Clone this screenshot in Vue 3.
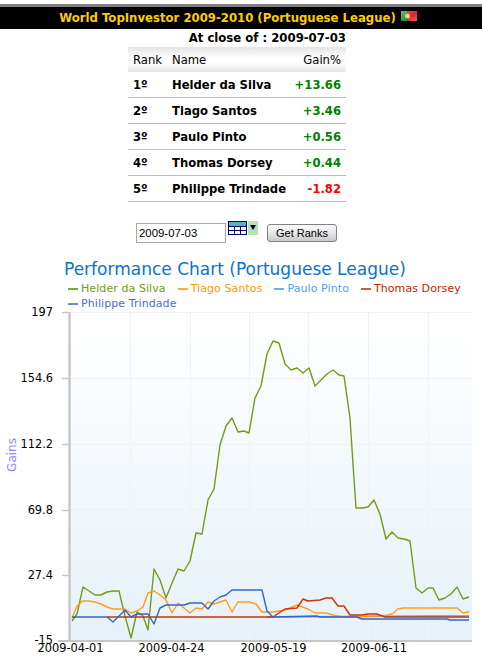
<script setup>
const ranks = [
  { pos: '1º', name: 'Helder da Silva', gain: '+13.66', up: true },
  { pos: '2º', name: 'Tiago Santos', gain: '+3.46', up: true },
  { pos: '3º', name: 'Paulo Pinto', gain: '+0.56', up: true },
  { pos: '4º', name: 'Thomas Dorsey', gain: '+0.44', up: true },
  { pos: '5º', name: 'Philippe Trindade', gain: '-1.82', up: false }
]
const legend = [
  { name: 'Helder da Silva', line: '#82a82a', text: '#6f9e14' },
  { name: 'Tiago Santos', line: '#ffab3d', text: '#ff9900' },
  { name: 'Paulo Pinto', line: '#6aaeff', text: '#4d9fff' },
  { name: 'Thomas Dorsey', line: '#d9573a', text: '#cc2200' },
  { name: 'Philippe Trindade', line: '#6a8ade', text: '#4b6bdd' }
]
const yLabels = [
  { t: '197', y: 315 }, { t: '154.6', y: 381 }, { t: '112.2', y: 447 },
  { t: '69.8', y: 513 }, { t: '27.4', y: 578 }, { t: '-15', y: 643 }
]
const xLabels = [
  { t: '2009-04-01', x: 70.5 }, { t: '2009-04-24', x: 171.5 },
  { t: '2009-05-19', x: 273.5 }, { t: '2009-06-11', x: 374 }
]
const vGrid = [130.5, 190.5, 249.5, 308.5, 368.5, 428.5]
const hGrid = [377.5, 443.5, 508.5, 574.5]
const ticks = [311, 377, 443, 509, 574]

const green = '72,620 77,613 83,586 89,590 95,594 101,594 107,591 113,590 119,590 125,615 131,637 137,611 143,615 148,629 154,568 160,579 166,597 172,582 178,568 184,570 190,560 196,532 202,533 208,499 214,488 220,444 226,425 232,417 238,431 244,430 249,432 255,397 261,385 267,353 273,340 279,342 285,363 291,369 297,367 303,372 309,367 315,385 321,379 327,373 333,369 339,374 344,375 350,417 353,463 356,507 362,507 368,506 374,499 380,513 386,538 392,531 398,537 404,538 410,540 416,587 422,592 428,587 433,587 439,599 445,597 451,593 457,586 463,598 469,596'
const orange = '72,617 77,605 83,600 89,600 95,601 101,603 107,606 113,608 119,608 125,608 131,612 137,610 143,606 148,592 154,590 160,594 166,599 172,612 178,602 184,607 190,612 196,607 202,608 208,601 214,603 220,601 226,599 232,611 238,601 249,601 256,603 262,611 273,611 285,609 297,604 308,608 315,612 326,612 333,614 343,616 357,616 373,615 383,615 392,613 398,608 403,607 457,607 463,612 469,611'
const sky = '267,616 430,615 469,615'
const red = '107,616 273,616 285,608 297,607 303,598 308,600 320,599 326,597 332,597 338,605 344,605 350,614 362,614 368,613 377,613 385,616 469,616'
const blue = '72,616 107,616 113,621 119,615 125,609 131,616 137,613 148,613 154,623 160,607 166,604 184,604 190,602 202,602 208,608 214,600 220,596 226,594 232,589 262,589 267,610 273,616 317,615 320,616 357,616 362,618 447,618 450,619 469,619'
</script>

<template>
  <div class="page">
    <header class="banner">
      <span>World TopInvestor 2009-2010 (Portuguese League)</span>
      <svg class="flag" width="16" height="10" viewBox="0 0 16 10">
        <defs>
          <linearGradient id="flagShine" x1="0" y1="0" x2="1" y2="1">
            <stop offset="0" stop-color="#fff" stop-opacity=".35" />
            <stop offset=".55" stop-color="#fff" stop-opacity="0" />
            <stop offset="1" stop-color="#fff" stop-opacity=".3" />
          </linearGradient>
        </defs>
        <rect width="6.5" height="10" fill="#1f9a3c" />
        <rect x="6.5" width="9.5" height="10" fill="#e0202a" />
        <circle cx="6.5" cy="5" r="2.6" fill="#e8c34a" />
        <circle cx="6.5" cy="5" r="1.3" fill="#d8d8e8" />
        <rect width="16" height="10" fill="url(#flagShine)" />
      </svg>
    </header>

    <div class="board">
      <div class="closing">At close of : 2009-07-03</div>
      <table class="ranks">
        <thead>
          <tr>
            <th class="c-rank">Rank</th>
            <th class="c-name">Name</th>
            <th class="c-gain">Gain%</th>
          </tr>
        </thead>
        <tbody>
          <tr v-for="r in ranks" :key="r.pos">
            <td class="c-rank">{{ r.pos }}</td>
            <td class="c-name">{{ r.name }}</td>
            <td class="c-gain" :class="r.up ? 'up' : 'down'">{{ r.gain }}</td>
          </tr>
        </tbody>
      </table>
    </div>

    <form class="picker" @submit.prevent>
      <input class="date" type="text" value="2009-07-03" />
      <svg class="cal" width="19" height="14" viewBox="0 0 19 14">
        <rect x="0.5" y="0.5" width="18" height="13" fill="#fff8c8" stroke="#000070" />
        <rect x="1" y="1" width="17" height="4" fill="#4fb8b8" />
        <path d="M0 5.5H19M0 9.5H19M6.5 5V14M12.5 5V14" stroke="#000070" fill="none" />
      </svg>
      <span class="drop"><i></i></span>
      <button class="go" type="button">Get Ranks</button>
    </form>

    <section class="perf">
      <h2 class="perf-title">Performance Chart (Portuguese League)</h2>
      <ul class="legend">
        <li v-for="l in legend" :key="l.name" :style="{ color: l.text }">
          <i :style="{ background: l.line }"></i>{{ l.name }}
        </li>
      </ul>
      <svg class="chart" width="482" height="352" viewBox="0 309 482 352">
        <defs>
          <linearGradient id="plotBg" x1="0" y1="0" x2="0" y2="1">
            <stop offset="0" stop-color="#ffffff" />
            <stop offset="1" stop-color="#e7f1f9" />
          </linearGradient>
        </defs>
        <rect x="70" y="311" width="402" height="328" fill="url(#plotBg)" />
        <g stroke="#f1f2f3" fill="none">
          <path v-for="x in vGrid" :key="x" :d="`M${x} 311V639`" />
          <path v-for="y in hGrid" :key="y" :d="`M70 ${y}H472`" />
          <path d="M70 311.5H472" />
        </g>
        <g stroke="#c6c6c6" fill="none">
          <path d="M69.5 311V641" stroke-width="2.4" />
          <path d="M58 640H472" stroke-width="2" />
          <path v-for="y in ticks" :key="y" :d="`M62 ${y + 0.5}H69`" stroke-width="1.4" />
        </g>
        <g fill="none" stroke-width="1.4" stroke-linejoin="round">
          <polyline :points="green" stroke="#6f9e14" />
          <polyline :points="sky" stroke="#4d9fff" />
          <polyline :points="orange" stroke="#ff9d1e" />
          <polyline :points="red" stroke="#cc3300" />
          <polyline :points="blue" stroke="#3366cc" />
        </g>
        <g class="axis">
          <text v-for="l in yLabels" :key="l.t" x="53" :y="l.y" text-anchor="end">{{ l.t }}</text>
          <text v-for="l in xLabels" :key="l.t" :x="l.x" y="651" text-anchor="middle">{{ l.t }}</text>
        </g>
        <text class="gains" transform="translate(16 454) rotate(-90)" text-anchor="middle">Gains</text>
      </svg>
    </section>
  </div>
</template>

<style>
html, body { margin: 0; background: #fff; }
</style>

<style scoped>
.page {
  width: 482px;
  height: 661px;
  overflow: hidden;
  font-family: "DejaVu Sans", Verdana, sans-serif;
  color: #000;
}
.banner {
  margin-top: 4px;
  border-top: 3px solid #808080;
  height: 22px;
  padding-right: 6px;
  background: #000;
  color: #ffcc00;
  font-size: 11.7px;
  font-weight: 700;
  display: flex;
  align-items: center;
  justify-content: center;
  gap: 5px;
}
.flag { margin-top: -4px; }
.board {
  width: 218px;
  margin-left: 128px;
}
.closing {
  height: 18px;
  line-height: 18px;
  text-align: right;
  font-size: 11.7px;
  font-weight: 700;
}
.ranks {
  width: 218px;
  border-collapse: collapse;
  font-size: 11.6px;
  table-layout: fixed;
}
.ranks th {
  height: 24px;
  padding: 1px 0 0;
  font-weight: 400;
  background: linear-gradient(#e4e4e4, #ffffff 45%, #ffffff 60%, #e6e6e6);
}
.ranks td {
  height: 24px;
  padding: 1px 0 0;
  font-weight: 700;
  border-bottom: 1px solid #bdbdbd;
}
.c-rank { width: 44px; padding-left: 5px !important; text-align: left; box-sizing: border-box; }
.c-name { text-align: left; }
.c-gain { width: 58px; padding-right: 5px !important; text-align: right; box-sizing: border-box; }
.up { color: #008000; }
.down { color: #ff0000; }
.picker {
  display: flex;
  align-items: flex-start;
  margin: 19px 0 0 136px;
  height: 24px;
}
.date {
  width: 90px;
  height: 20px;
  box-sizing: border-box;
  margin: 2px 2px 0 0;
  padding: 1px 2px;
  border: 1px solid #a9a9a9;
  font: 11.4px "Liberation Sans", Arial, sans-serif;
  color: #000;
  outline: none;
}
.drop {
  width: 10px;
  height: 14px;
  margin-left: 1px;
  background: #b6e2b6;
  display: flex;
  justify-content: center;
  padding-top: 4px;
  box-sizing: border-box;
}
.drop i {
  width: 0;
  height: 0;
  border-left: 3.5px solid transparent;
  border-right: 3.5px solid transparent;
  border-top: 5px solid #000;
}
.cal { flex: none; }
.go {
  width: 70px;
  height: 18px;
  box-sizing: border-box;
  margin: 3px 0 0 9px;
  padding: 0;
  border: 1px solid #808080;
  border-radius: 3px;
  background: linear-gradient(#fafafa, #e8e8e8 50%, #c8c8c8);
  font: 11px "Liberation Sans", Arial, sans-serif;
  color: #000;
}
.perf-title {
  margin: 14px 0 0 64px;
  height: 20px;
  line-height: 20px;
  font-size: 17px;
  font-weight: 400;
  color: #0b72d0;
  white-space: nowrap;
}
.legend {
  list-style: none;
  margin: 2px 0 0 68px;
  padding: 0;
  width: 405px;
  display: flex;
  flex-wrap: wrap;
  column-gap: 12px;
  font-size: 11px;
  letter-spacing: 0.08px;
}
.legend li {
  height: 15px;
  line-height: 15px;
  display: flex;
  align-items: center;
  white-space: nowrap;
}
.legend i {
  width: 10px;
  height: 2px;
  margin-right: 3px;
}
.chart { display: block; margin-top: -1px; overflow: visible; }
.axis {
  font-size: 11.4px;
  fill: #000;
}
.gains {
  font-size: 12px;
  fill: #8a8aff;
}
</style>
